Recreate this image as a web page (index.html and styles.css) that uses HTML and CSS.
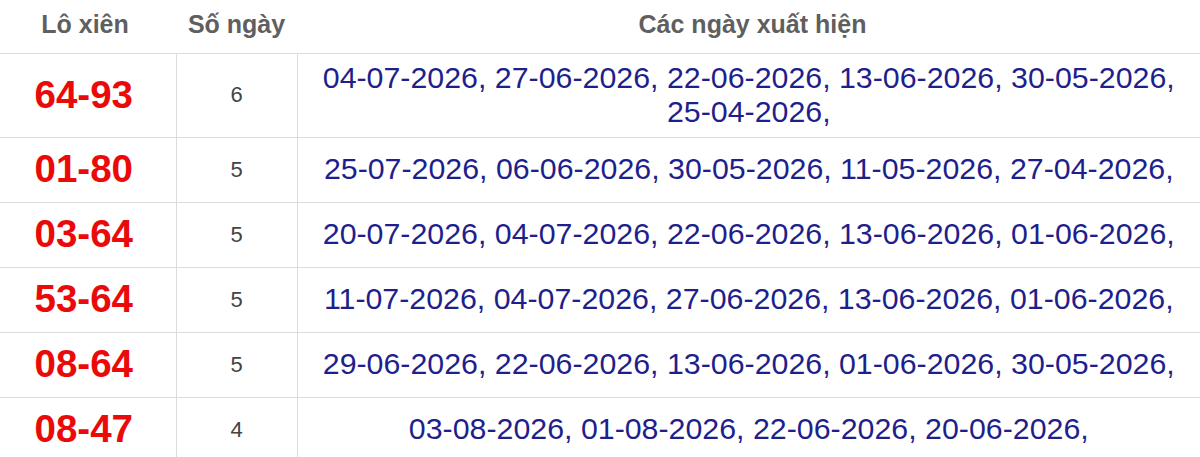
FILE: index.html
```html
<!DOCTYPE html>
<html lang="vi">
<head>
<meta charset="utf-8">
<title>Lô xiên</title>
<link rel="stylesheet" href="styles.css">
</head>
<body>
<table class="lx-table">
  <colgroup>
    <col class="c-pair">
    <col class="c-count">
    <col class="c-dates">
  </colgroup>
  <thead>
    <tr>
      <th class="h-pair">Lô xiên</th>
      <th>Số ngày</th>
      <th class="h-dates">Các ngày xuất hiện</th>
    </tr>
  </thead>
  <tbody>
    <tr>
      <td class="pair">64-93</td>
      <td class="count">6</td>
      <td class="dates">04-07-2026, 27-06-2026, 22-06-2026, 13-06-2026, 30-05-2026, 25-04-2026,</td>
    </tr>
    <tr>
      <td class="pair">01-80</td>
      <td class="count">5</td>
      <td class="dates">25-07-2026, 06-06-2026, 30-05-2026, 11-05-2026, 27-04-2026,</td>
    </tr>
    <tr>
      <td class="pair">03-64</td>
      <td class="count">5</td>
      <td class="dates">20-07-2026, 04-07-2026, 22-06-2026, 13-06-2026, 01-06-2026,</td>
    </tr>
    <tr>
      <td class="pair">53-64</td>
      <td class="count">5</td>
      <td class="dates">11-07-2026, 04-07-2026, 27-06-2026, 13-06-2026, 01-06-2026,</td>
    </tr>
    <tr>
      <td class="pair">08-64</td>
      <td class="count">5</td>
      <td class="dates">29-06-2026, 22-06-2026, 13-06-2026, 01-06-2026, 30-05-2026,</td>
    </tr>
    <tr>
      <td class="pair">08-47</td>
      <td class="count">4</td>
      <td class="dates">03-08-2026, 01-08-2026, 22-06-2026, 20-06-2026,</td>
    </tr>
  </tbody>
</table>
</body>
</html>
```

FILE: styles.css
```css
html, body {
  margin: 0;
  padding: 0;
  background: #ffffff;
}

body {
  font-family: "Liberation Sans", Arial, sans-serif;
}

.lx-table {
  width: 1200px;
  border-collapse: collapse;
  table-layout: fixed;
}

.c-pair { width: 176px; }
.c-count { width: 121px; }
.c-dates { width: 903px; }

.lx-table th {
  height: 53px;
  padding: 0 4px 4px;
  font-size: 25px;
  font-weight: bold;
  color: #5f5f5f;
  text-align: center;
  vertical-align: middle;
  border-bottom: 1px solid #dcdcdc;
  line-height: 1;
  box-sizing: border-box;
}

.lx-table th.h-pair { padding-right: 10px; }
.lx-table th.h-dates { padding-left: 12px; }

.lx-table td {
  height: 65px;
  padding: 7px 6px;
  text-align: center;
  vertical-align: middle;
  border: 1px solid #dcdcdc;
  box-sizing: border-box;
}

.lx-table tr > td:first-child { border-left: none; }
.lx-table tr > td:last-child { border-right: none; }

.lx-table td.pair {
  padding-left: 0;
  padding-right: 8px;
  font-size: 38.5px;
  font-weight: bold;
  color: #ea0a0a;
  line-height: 1.15;
}

.count {
  font-size: 22px;
  color: #444444;
}

.dates {
  font-size: 30.35px;
  color: #1f1f8c;
  line-height: 34.5px;
}
```
